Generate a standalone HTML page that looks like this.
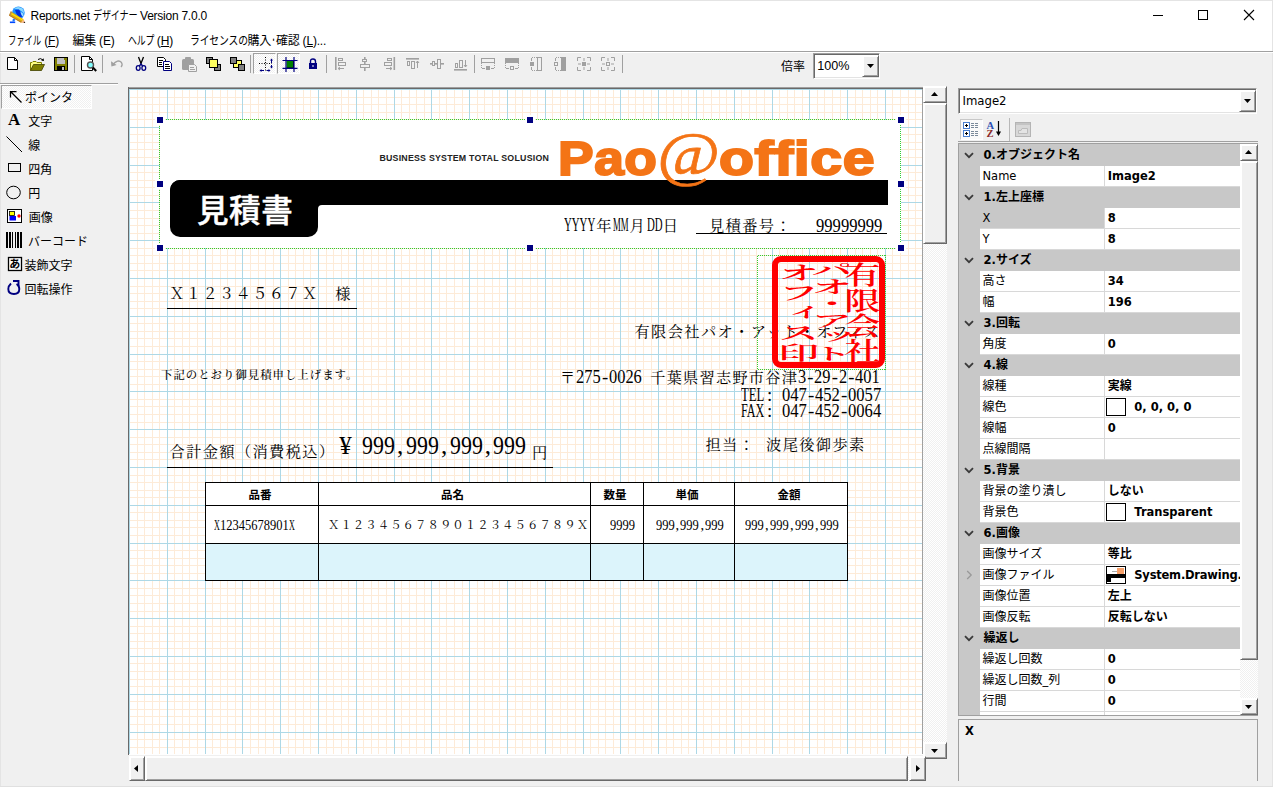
<!DOCTYPE html>
<html lang="ja"><head><meta charset="utf-8"><title>Reports.net デザイナー Version 7.0.0</title>
<style>
*{box-sizing:border-box;margin:0;padding:0}
html,body{width:1273px;height:787px;overflow:hidden;background:#f0f0f0}
body{position:relative;font-family:"Liberation Sans","Noto Sans CJK JP",sans-serif;font-size:12px;color:#000;line-height:1}
.a{position:absolute}
.t{position:absolute;white-space:nowrap;line-height:1}
.ui{font-family:"Liberation Sans","Noto Sans CJK JP",sans-serif;font-size:12px}
.mi{font-family:"Liberation Serif","Noto Serif CJK JP","Noto Serif CJK SC",serif}
.go{font-family:"Liberation Sans","Noto Sans CJK JP",sans-serif}
.hm{display:inline-block;font-family:"Liberation Serif",serif;letter-spacing:0;line-height:0;transform-origin:0 50%;white-space:pre}
/* 3D raised (scrollbar buttons / thumbs) */
.rb{position:absolute;background:#f0f0f0;border-style:solid;border-width:1px;border-color:#fff #696969 #696969 #fff;box-shadow:inset 1px 1px 0 #fff,inset -1px -1px 0 #a0a0a0}
.trk{position:absolute;background:repeating-conic-gradient(#fff 0 25%,#f0f0f0 0 50%) 0 0/2px 2px}
.sunk{position:absolute;background:#fff;border-style:solid;border-width:1px;border-color:#a0a0a0 #fff #fff #a0a0a0;box-shadow:inset 1px 1px 0 #696969,inset -1px -1px 0 #e3e3e3}
.chk{position:absolute;background:repeating-conic-gradient(#fff 0 25%,#f0f0f0 0 50%) 0 0/2px 2px;border-style:solid;border-width:1px;border-color:#a0a0a0 #fff #fff #a0a0a0}
.sep{position:absolute;width:1px;background:#a0a0a0}
svg{position:absolute;overflow:visible}
.hd{position:absolute;width:6px;height:6px;background:#000080;box-shadow:0 0 0 2px #fff}
/* property grid */
.pg{font-family:"DejaVu Sans","Noto Sans CJK JP",sans-serif;font-size:12px}
.pg .l{font-size:11.5px}
.cat{position:absolute;left:0;width:281px;height:21px;background:#c8c8c8;font-weight:bold}
.row{position:absolute;left:0;width:281px;height:21px;background:#c8c8c8}
.row .n{position:absolute;left:21px;top:0;width:124px;height:20px;background:#fff}
.row .v{position:absolute;left:146px;top:0;width:135px;height:20px;background:#fff;font-weight:bold;overflow:hidden}
.row .ln{position:absolute;left:21px;top:20px;width:260px;height:1px;background:#d8d8d8}
.row .vl{position:absolute;left:145px;top:0;width:1px;height:21px;background:#d8d8d8}
.pg .x{position:absolute;white-space:nowrap;line-height:1}
.k{display:inline-block;transform-origin:0 50%}

</style></head>
<body>
<div class="a" style="left:0px;top:0px;width:1273px;height:51px;background:#fff;"></div>
<div class="a" style="left:0px;top:0px;width:1273px;height:1px;background:#e4e4e4;"></div>
<div class="a" style="left:0px;top:0px;width:1px;height:787px;background:#e4e4e4;"></div>
<div class="a" style="left:1272px;top:0px;width:1px;height:787px;background:#e4e4e4;"></div>
<div class="a" style="left:0px;top:786px;width:1273px;height:1px;background:#e0e0e0;"></div>
<svg style="left:0px;top:0px" width="32" height="32" viewBox="0 0 32 32" ><circle cx="18.4" cy="12.8" r="6.300" fill="#1e90ff"/><path d="M14 8.500 Q18 5.500 22.500 8.500 Q24.500 11 24 14 Q22 9.500 14 8.500Z" fill="#8ad8ff"/><path d="M15 10 L19 9.500 L21 13 L22.500 16.500 L19 17.500 L16.500 14Z" fill="#0030e0"/><path d="M20.500 12 Q23.500 12.500 23.500 16 Q21.500 17 20.500 12Z" fill="#9fe0ff"/><rect x="9.900" y="21.500" width="5.300" height="1.600" fill="#0048ff"/><path d="M12.300 21.500 L13 18.500 L15.500 19.500 L14.200 21.500Z" fill="#1e78ff"/><path d="M10.800 11.300 L9 15.500 L21.200 22.700 L23.600 19.300Z" fill="#d9a31c"/><path d="M10.400 12.300 L23.300 19.800 L22.700 20.800 L9.900 13.400Z" fill="#ffe600"/><path d="M9.300 14.800 L21.600 22.100 L21.200 22.800 L9 15.500Z" fill="#b9771e"/><path d="M10.800 11.300 L9 15.500 L10.300 16.300 L12.100 12.100Z" fill="#c08a4a"/><path d="M23.600 19.300 L21.200 22.700 L25.200 23Z" fill="#f4b183"/><path d="M24.300 21.500 L23.600 22.900 L25.300 23.100Z" fill="#111"/></svg>
<div class="t ui" style="left:30.5px;top:9.8px;letter-spacing:-0.25px">Reports.net <span class="k" style="transform:scaleX(0.76);margin-right:-14.4px">デザイナー</span> Version 7.0.0</div>
<svg style="left:1153px;top:15px" width="11" height="1" viewBox="0 0 11 1" shape-rendering="crispEdges"><rect width="10" height="1" fill="#000"/></svg>
<svg style="left:1198px;top:10px" width="11" height="11" viewBox="0 0 11 11" shape-rendering="crispEdges"><rect x=".5" y=".5" width="9" height="9" fill="none" stroke="#000" stroke-width="1"/></svg>
<svg style="left:1244px;top:10px" width="11" height="11" viewBox="0 0 11 11" ><path d="M0 0 L10 10 M10 0 L0 10" stroke="#000" stroke-width="1.1" fill="none"/></svg>
<div class="t ui" style="left:8.3px;top:34.5px;letter-spacing:-.2px"><span class="k" style="transform:scaleX(0.7);margin-right:-14.4px">ファイル</span> (<u>F</u>)</div>
<div class="t ui" style="left:72.4px;top:34.5px;letter-spacing:-.2px">編集 (E)</div>
<div class="t ui" style="left:127.7px;top:34.5px;letter-spacing:-.2px"><span class="k" style="transform:scaleX(0.74);margin-right:-9.36px">ヘルプ</span> (<u>H</u>)</div>
<div class="t ui" style="left:189.8px;top:34.5px;letter-spacing:-.2px"><span class="k" style="transform:scaleX(0.82);margin-right:-12.96px">ライセンスの</span>購入<span class="k" style="transform:scaleX(.42);margin-right:-6.96px">・</span>確認 (<u>L</u>)...</div>
<div class="a" style="left:0px;top:51px;width:1273px;height:1px;background:#a0a0a0;"></div>
<div class="a" style="left:0px;top:52px;width:1273px;height:1px;background:#fff;"></div>
<div class="chk" style="left:253px;top:53px;width:23px;height:21px"></div>
<div class="chk" style="left:277px;top:53px;width:23px;height:21px"></div>
<svg style="left:5px;top:56px" width="16" height="16" viewBox="0 0 16 16" ><path d="M2.5 1.5 H9.5 L12.5 4.5 V13.5 H2.5 Z" fill="#fff" stroke="#000"/><path d="M9.5 1.5 V4.5 H12.5" fill="none" stroke="#000"/></svg>
<svg style="left:29px;top:56px" width="16" height="16" viewBox="0 0 16 16" ><path d="M1.5 14.5 V6.5 H3 L4 5.5 H7 L8 6.5 H12.5 V8.5" fill="#ffff80" stroke="#808000"/><path d="M1.5 14.5 L4.5 8.5 H15.5 L12.5 14.5 Z" fill="#808000" stroke="#404000" stroke-width=".8"/><path d="M9 3.5 Q11.5 1.5 14 4" fill="none" stroke="#000"/><path d="M12.2 4.6 L15 5 L14.6 2.2 Z" fill="#000"/></svg>
<svg style="left:53px;top:56px" width="16" height="16" viewBox="0 0 16 16" ><rect x="1.5" y="1.5" width="13" height="13" fill="#808000" stroke="#000"/><rect x="4" y="2" width="8" height="6" fill="#c0c0c0"/><rect x="11" y="2" width="1" height="2" fill="#808000"/><rect x="4" y="10" width="8" height="4" fill="#000"/><rect x="9" y="11" width="2" height="3" fill="#c0c0c0"/></svg>
<svg style="left:81px;top:56px" width="16" height="16" viewBox="0 0 16 16" ><path d="M.5 .5 H8.5 L11.5 3.5 V14.5 H.5 Z" fill="#fff" stroke="#000"/><path d="M8.5 .5 V3.5 H11.5" fill="none" stroke="#000"/><circle cx="9.5" cy="9" r="3" fill="#80ffff" stroke="#555" stroke-width="1.4"/><path d="M11.8 11.5 L15.2 15" stroke="#000" stroke-width="2"/></svg>
<svg style="left:109px;top:56px" width="16" height="16" viewBox="0 0 16 16" ><path d="M3.5 9 Q9 2.5 12.5 6.5 Q14 9 12 11" fill="none" stroke="#a0a0a0" stroke-width="1.3"/><path d="M2 5.2 L2.4 10.6 L7.6 9 Z" fill="#a0a0a0"/></svg>
<svg style="left:133px;top:56px" width="16" height="16" viewBox="0 0 16 16" ><path d="M5.5 1 L8.6 9 M10.5 1 L7.4 9" stroke="#000" stroke-width="1.3" fill="none"/><ellipse cx="5.2" cy="12" rx="1.9" ry="2.4" fill="none" stroke="#000080" stroke-width="1.3"/><ellipse cx="10.8" cy="12" rx="1.9" ry="2.4" fill="none" stroke="#000080" stroke-width="1.3"/><path d="M6.3 10 L8 8 L9.7 10" stroke="#000080" stroke-width="1.2" fill="none"/></svg>
<svg style="left:157px;top:56px" width="16" height="16" viewBox="0 0 16 16" ><path d="M.5 1.5 H6.5 L8.5 3.5 V10.5 H.5 Z" fill="#fff" stroke="#000"/><path d="M2 4.5H6 M2 6.5H5 M2 8.5H5" stroke="#000"/><path d="M6.5 5.5 H12.5 L14.5 7.5 V14.5 H6.5 Z" fill="#fff" stroke="#000080"/><path d="M8 8.5H12 M8 10.5H13 M8 12.5H13" stroke="#000"/></svg>
<svg style="left:181px;top:56px" width="16" height="16" viewBox="0 0 16 16" ><rect x="1" y="3" width="12" height="11" rx="1.5" fill="#a0a0a0"/><rect x="4" y="1" width="6" height="3.5" rx="1" fill="#a0a0a0"/><path d="M7.5 8.5 H13.5 L15.5 10.5 V15.5 H7.5 Z" fill="#f0f0f0" stroke="#a0a0a0"/><path d="M9 11.5H13 M9 13.5H14" stroke="#a0a0a0"/></svg>
<svg style="left:205px;top:56px" width="16" height="16" viewBox="0 0 16 16" ><rect x="1.5" y="1.5" width="6" height="6" fill="#808080" stroke="#000"/><rect x="9.5" y="8.5" width="6" height="6" fill="#808080" stroke="#000"/><rect x="4.5" y="3.5" width="8" height="8" fill="#ffff60" stroke="#000"/></svg>
<svg style="left:229px;top:56px" width="16" height="16" viewBox="0 0 16 16" ><rect x="4.5" y="4.5" width="8" height="7" fill="#ffff60" stroke="#000"/><rect x="1.5" y="1.5" width="6" height="6" fill="#808080" stroke="#000"/><rect x="9.5" y="8.5" width="6" height="6" fill="#808080" stroke="#000"/></svg>
<svg style="left:258px;top:56px" width="16" height="16" viewBox="0 0 16 16" ><path d="M7.5 1 V15" stroke="#000" stroke-dasharray="1 1.5"/><path d="M1 7.5 H14" stroke="#000" stroke-dasharray="1 1.5"/><path d="M13.5 3 V7 M13.5 9 V12 M3 14.5 H6 M8.5 14.5 H11" stroke="#000080"/><path d="M12 4.5 L13.5 2.5 L15 4.5Z M12 10.5 L13.5 12.5 L15 10.5Z M3.5 13 L1.5 14.5 L3.5 16Z M10.5 13 L12.5 14.5 L10.5 16Z" fill="#000080"/></svg>
<svg style="left:280.5px;top:56px" width="16" height="16" viewBox="0 0 16 16" ><rect x="5.500" y="5" width="7" height="7" fill="#008000"/><path d="M5.500 12 H12.500 V5" stroke="#000" fill="none"/><path d="M5 1 V16 M13 1 V16 M1.500 4.500 H16.500 M1.500 12.300 H16.500" stroke="#000080" stroke-width="1.200"/></svg>
<svg style="left:304.5px;top:56px" width="16" height="16" viewBox="0 0 16 16" ><path d="M5.5 8 V5.5 Q5.5 3 8 3 Q10.5 3 10.5 5.5 V8" fill="none" stroke="#000080" stroke-width="1.4"/><rect x="4" y="7" width="8" height="6" fill="#000080"/><rect x="7.5" y="9" width="1" height="2" fill="#fff"/></svg>
<svg style="left:333px;top:56px" width="16" height="16" viewBox="0 0 16 16" ><rect x="2" y="1" width="1.6" height="13" fill="#a0a0a0"/><rect x="5.5" y="2.5" width="4" height="2" fill="none" stroke="#a0a0a0"/><rect x="5.5" y="6.5" width="7" height="3" fill="none" stroke="#a0a0a0"/><path d="M5 12.5 H11 M5 12.5 l2 -1.5 M5 12.5 l2 1.5" stroke="#a0a0a0" fill="none"/></svg>
<svg style="left:357px;top:56px" width="16" height="16" viewBox="0 0 16 16" ><rect x="7" y="1" width="1.6" height="14" fill="#a0a0a0"/><rect x="5.5" y="3.5" width="4" height="2" fill="#f0f0f0" stroke="#a0a0a0"/><rect x="3.5" y="8.5" width="9" height="3" fill="#f0f0f0" stroke="#a0a0a0"/></svg>
<svg style="left:381px;top:56px" width="16" height="16" viewBox="0 0 16 16" ><rect x="12.5" y="1" width="1.6" height="13" fill="#a0a0a0"/><rect x="6.5" y="2.5" width="4" height="2" fill="none" stroke="#a0a0a0"/><rect x="3.5" y="6.5" width="7" height="3" fill="none" stroke="#a0a0a0"/><path d="M5 12.5 H11 M11 12.5 l-2 -1.5 M11 12.5 l-2 1.5" stroke="#a0a0a0" fill="none"/></svg>
<svg style="left:405px;top:56px" width="16" height="16" viewBox="0 0 16 16" ><rect x="1" y="2" width="13" height="1.6" fill="#a0a0a0"/><rect x="2.5" y="5.5" width="2" height="4" fill="none" stroke="#a0a0a0"/><rect x="6.5" y="5.5" width="3" height="7" fill="none" stroke="#a0a0a0"/><path d="M12.5 5 V12 M12.5 5 l-1.5 2 M12.5 5 l1.5 2" stroke="#a0a0a0" fill="none"/></svg>
<svg style="left:429px;top:56px" width="16" height="16" viewBox="0 0 16 16" ><rect x="1" y="7" width="14" height="1.6" fill="#a0a0a0"/><rect x="3.5" y="5.5" width="2" height="4" fill="#f0f0f0" stroke="#a0a0a0"/><rect x="8.5" y="3.5" width="3" height="9" fill="#f0f0f0" stroke="#a0a0a0"/></svg>
<svg style="left:453px;top:56px" width="16" height="16" viewBox="0 0 16 16" ><rect x="1" y="13" width="13" height="1.6" fill="#a0a0a0"/><rect x="2.5" y="7.5" width="2" height="4" fill="none" stroke="#a0a0a0"/><rect x="6.5" y="4.5" width="3" height="7" fill="none" stroke="#a0a0a0"/><path d="M12.5 4 V11 M12.5 11 l-1.5 -2 M12.5 11 l1.5 -2" stroke="#a0a0a0" fill="none"/></svg>
<svg style="left:480px;top:56px" width="16" height="16" viewBox="0 0 16 16" ><rect x="1.5" y="2.5" width="13" height="4" fill="#f0f0f0" stroke="#a0a0a0"/><path d="M1.5 7 V12 M14.5 7 V12" stroke="#a0a0a0" stroke-dasharray="1 1"/><rect x="6" y="10" width="4" height="4" fill="#a0a0a0"/><path d="M2 12.5 H5 M11 12.5 H14" stroke="#a0a0a0"/></svg>
<svg style="left:504px;top:56px" width="16" height="16" viewBox="0 0 16 16" ><rect x="1" y="2" width="14" height="5" fill="#a0a0a0"/><path d="M1.5 7 V12 M14.5 7 V12" stroke="#a0a0a0" stroke-dasharray="1 1"/><rect x="6.500" y="10.5" width="3" height="3" fill="none" stroke="#a0a0a0"/><path d="M2 12.5 H5 M11 12.5 H14" stroke="#a0a0a0"/></svg>
<svg style="left:528px;top:56px" width="16" height="16" viewBox="0 0 16 16" ><rect x="9.500" y="1.5" width="4" height="13" fill="#f0f0f0" stroke="#a0a0a0"/><path d="M4 1.5 H9 M4 14.5 H9" stroke="#a0a0a0" stroke-dasharray="1 1"/><rect x="2" y="6" width="4" height="4" fill="#a0a0a0"/><path d="M3.500 2 V5 M3.500 11 V14" stroke="#a0a0a0"/></svg>
<svg style="left:552px;top:56px" width="16" height="16" viewBox="0 0 16 16" ><rect x="9" y="1" width="5" height="14" fill="#a0a0a0"/><path d="M4 1.5 H9 M4 14.5 H9" stroke="#a0a0a0" stroke-dasharray="1 1"/><rect x="2.500" y="6.500" width="3" height="3" fill="none" stroke="#a0a0a0"/><path d="M3.500 2 V5 M3.500 11 V14" stroke="#a0a0a0"/></svg>
<svg style="left:576px;top:56px" width="16" height="16" viewBox="0 0 16 16" ><path d="M1.500 5 V1.500 H5 M11 1.500 H14.500 V5 M14.500 11 V14.500 H11 M5 14.500 H1.500 V11" fill="none" stroke="#a0a0a0"/><rect x="6" y="6" width="4" height="4" fill="#a0a0a0"/><path d="M8 2 V5 M8 11 V14 M2 8 H5 M11 8 H14" stroke="#a0a0a0"/></svg>
<svg style="left:600px;top:56px" width="16" height="16" viewBox="0 0 16 16" ><path d="M1.500 5 V1.500 H5 M11 1.500 H14.500 V5 M14.500 11 V14.500 H11 M5 14.500 H1.500 V11" fill="none" stroke="#a0a0a0"/><rect x="6.500" y="6.500" width="3" height="3" fill="none" stroke="#a0a0a0"/><path d="M8 2 V5 M8 11 V14 M2 8 H5 M11 8 H14" stroke="#a0a0a0"/></svg>
<div class="sep" style="left:74px;top:55px;height:18px"></div>
<div class="sep" style="left:102px;top:55px;height:18px"></div>
<div class="sep" style="left:250px;top:55px;height:18px"></div>
<div class="sep" style="left:326px;top:55px;height:18px"></div>
<div class="sep" style="left:474px;top:55px;height:18px"></div>
<div class="sep" style="left:622px;top:55px;height:18px"></div>
<div class="t ui" style="left:781px;top:61.3px;">倍率</div>
<div class="sunk" style="left:813px;top:53px;width:67px;height:26px"></div>
<div class="t ui" style="left:817.3px;top:60.1px;font-size:12.6px">100%</div>
<div class="rb" style="left:862px;top:55px;width:17px;height:22px"></div>
<svg style="left:867px;top:64px" width="7" height="4" viewBox="0 0 7 4" ><path d="M0 0 H7 L3.5 4Z" fill="#000"/></svg>
<div class="a" style="left:0px;top:83px;width:118px;height:1px;background:#a0a0a0;"></div>
<div class="a" style="left:0px;top:84px;width:118px;height:1px;background:#fff;"></div>
<div class="chk" style="left:1px;top:85px;width:91px;height:24px"></div>
<svg style="left:9px;top:90px" width="14" height="14" viewBox="0 0 14 14" ><path d="M1.500 7.500 V1.500 H7.500 M1.500 1.500 L12.500 12.500" fill="none" stroke="#000" stroke-width="1.250"/></svg>
<div class="t ui" style="left:25px;top:92px;">ポインタ</div>
<div class="t mi" style="left:8px;top:111.3px;font-weight:bold;font-size:17px">A</div>
<div class="t ui" style="left:28.2px;top:115.5px;">文字</div>
<svg style="left:6px;top:136px" width="17" height="17" viewBox="0 0 17 17" ><path d="M.5 .5 L16 16" stroke="#000" stroke-width="1"/></svg>
<div class="t ui" style="left:28.2px;top:139.5px;">線</div>
<svg style="left:8px;top:163px" width="14" height="10" viewBox="0 0 14 10" shape-rendering="crispEdges"><rect x=".5" y=".5" width="12" height="8" fill="none" stroke="#000" stroke-width="1"/></svg>
<div class="t ui" style="left:28.2px;top:163.5px;">四角</div>
<svg style="left:6px;top:185px" width="16" height="15" viewBox="0 0 16 15" ><ellipse cx="7.5" cy="7.500" rx="6.8" ry="6.300" fill="none" stroke="#000" stroke-width="1"/></svg>
<div class="t ui" style="left:28.2px;top:187.5px;">円</div>
<svg style="left:7px;top:209px" width="16" height="15" viewBox="0 0 16 15" ><rect x=".5" y=".5" width="14" height="13" fill="#fff" stroke="#000"/><rect x="2.500" y="2.500" width="5" height="4" fill="#ffff00" stroke="#000" stroke-width=".8"/><rect x="2.500" y="7" width="6.500" height="4.500" fill="#0000ff"/><circle cx="12" cy="7" r="1.700" fill="#ff0000"/></svg>
<div class="t ui" style="left:28.7px;top:211.5px;">画像</div>
<svg style="left:6px;top:232px" width="17" height="16" viewBox="0 0 17 16" shape-rendering="crispEdges"><path d="M1 0V16 M4 0V16 M6.500 0V16 M9.500 0V16 M12 0V16 M15 0V16" stroke="#000" stroke-width="1.600"/></svg>
<div class="t ui" style="left:28px;top:235.5px;">バーコード</div>
<svg style="left:8px;top:257px" width="15" height="14" viewBox="0 0 15 14" ><rect x=".5" y=".5" width="13" height="13" fill="#fff" stroke="#000" stroke-width="1.300"/></svg>
<div class="t ui" style="left:9.3px;top:258.6px;font-size:11px;font-weight:bold">あ</div>
<div class="t ui" style="left:24.5px;top:259.5px;">装飾文字</div>
<svg style="left:7px;top:280px" width="15" height="16" viewBox="0 0 15 16" ><path d="M4 3.500 Q1.300 6 1.300 9 Q1.300 14 7 14 Q12.300 14 12.300 9 Q12.300 5.500 9.500 4" fill="none" stroke="#000080" stroke-width="1.900"/><path d="M6 1 H11.500 V6.500" fill="none" stroke="#000080" stroke-width="1.900"/></svg>
<div class="t ui" style="left:24.5px;top:283.5px;">回転操作</div>
<div class="trk" style="left:923px;top:86px;width:24px;height:673px"></div>
<div class="rb" style="left:923px;top:86px;width:24px;height:17px"></div>
<svg style="left:931px;top:92px" width="7" height="4" viewBox="0 0 7 4" ><path d="M0 4 H7 L3.5 0Z" fill="#000"/></svg>
<div class="rb" style="left:923px;top:103px;width:24px;height:141px"></div>
<div class="rb" style="left:923px;top:742px;width:24px;height:17px"></div>
<svg style="left:931px;top:749px" width="7" height="4" viewBox="0 0 7 4" ><path d="M0 0 H7 L3.5 4Z" fill="#000"/></svg>
<div class="trk" style="left:129px;top:756px;width:794px;height:25px"></div>
<div class="rb" style="left:129px;top:756px;width:16px;height:25px"></div>
<svg style="left:134px;top:765px" width="4" height="7" viewBox="0 0 4 7" ><path d="M4 0 V7 L0 3.5Z" fill="#000"/></svg>
<div class="rb" style="left:145px;top:756px;width:763px;height:25px"></div>
<div class="rb" style="left:909px;top:756px;width:17px;height:25px"></div>
<svg style="left:916px;top:765px" width="4" height="7" viewBox="0 0 4 7" ><path d="M0 0 V7 L4 3.5Z" fill="#000"/></svg>
<div class="a" style="left:128px;top:87px;width:795px;height:1px;background:#a0a0a0;"></div>
<div class="a" style="left:128px;top:88px;width:795px;height:1px;background:#696969;"></div>
<div class="a" style="left:128px;top:87px;width:1px;height:668px;background:#696969;"></div>
<div class="a" style="left:922px;top:89px;width:1px;height:666px;background:#a0a0a0;"></div>
<div class="a" style="left:129px;top:754px;width:794px;height:1px;background:#fff;"></div>
<div class="a" id="cv" style="left:129px;top:89px;width:793px;height:665px;background:#fff;overflow:hidden">
<svg style="left:0;top:0" width="793" height="665" shape-rendering="crispEdges"><path d="M8.5 0V665M15.5 0V665M23.5 0V665M30.5 0V665M45.5 0V665M53.5 0V665M60.5 0V665M68.5 0V665M83.5 0V665M91.5 0V665M98.5 0V665M106.5 0V665M121.5 0V665M129.5 0V665M136.5 0V665M144.5 0V665M159.5 0V665M166.5 0V665M174.5 0V665M181.5 0V665M197.5 0V665M204.5 0V665M212.5 0V665M219.5 0V665M234.5 0V665M242.5 0V665M249.5 0V665M257.5 0V665M272.5 0V665M280.5 0V665M287.5 0V665M295.5 0V665M310.5 0V665M317.5 0V665M325.5 0V665M333.5 0V665M348.5 0V665M355.5 0V665M363.5 0V665M370.5 0V665M386.5 0V665M393.5 0V665M401.5 0V665M408.5 0V665M423.5 0V665M431.5 0V665M438.5 0V665M446.5 0V665M461.5 0V665M469.5 0V665M476.5 0V665M484.5 0V665M499.5 0V665M506.5 0V665M514.5 0V665M522.5 0V665M537.5 0V665M544.5 0V665M552.5 0V665M559.5 0V665M574.5 0V665M582.5 0V665M590.5 0V665M597.5 0V665M612.5 0V665M620.5 0V665M627.5 0V665M635.5 0V665M650.5 0V665M658.5 0V665M665.5 0V665M673.5 0V665M688.5 0V665M695.5 0V665M703.5 0V665M711.5 0V665M726.5 0V665M733.5 0V665M741.5 0V665M748.5 0V665M763.5 0V665M771.5 0V665M779.5 0V665M786.5 0V665M0 8.5H793M0 15.5H793M0 23.5H793M0 30.5H793M0 45.5H793M0 53.5H793M0 60.5H793M0 68.5H793M0 83.5H793M0 91.5H793M0 98.5H793M0 106.5H793M0 121.5H793M0 129.5H793M0 136.5H793M0 144.5H793M0 159.5H793M0 166.5H793M0 174.5H793M0 181.5H793M0 197.5H793M0 204.5H793M0 212.5H793M0 219.5H793M0 234.5H793M0 242.5H793M0 249.5H793M0 257.5H793M0 272.5H793M0 280.5H793M0 287.5H793M0 295.5H793M0 310.5H793M0 317.5H793M0 325.5H793M0 333.5H793M0 348.5H793M0 355.5H793M0 363.5H793M0 370.5H793M0 386.5H793M0 393.5H793M0 401.5H793M0 408.5H793M0 423.5H793M0 431.5H793M0 438.5H793M0 446.5H793M0 461.5H793M0 469.5H793M0 476.5H793M0 484.5H793M0 499.5H793M0 506.5H793M0 514.5H793M0 522.5H793M0 537.5H793M0 544.5H793M0 552.5H793M0 559.5H793M0 574.5H793M0 582.5H793M0 590.5H793M0 597.5H793M0 612.5H793M0 620.5H793M0 627.5H793M0 635.5H793M0 650.5H793M0 658.5H793" stroke="#fdebd8" stroke-width="1" fill="none"/><path d="M0.5 0V665M38.5 0V665M76.5 0V665M113.5 0V665M151.5 0V665M189.5 0V665M227.5 0V665M265.5 0V665M302.5 0V665M340.5 0V665M378.5 0V665M416.5 0V665M454.5 0V665M491.5 0V665M529.5 0V665M567.5 0V665M605.5 0V665M643.5 0V665M680.5 0V665M718.5 0V665M756.5 0V665M0 0.5H793M0 38.5H793M0 76.5H793M0 113.5H793M0 151.5H793M0 189.5H793M0 227.5H793M0 265.5H793M0 302.5H793M0 340.5H793M0 378.5H793M0 416.5H793M0 454.5H793M0 491.5H793M0 529.5H793M0 567.5H793M0 605.5H793M0 643.5H793" stroke="#add8e6" stroke-width="1" fill="none"/></svg>
<div class="a" style="left:31px;top:31px;width:741px;height:128px;background:#fff;"></div>
<div class="t go" id="biz" style="left:250.4px;top:64.6px;font-size:8.8px;font-weight:bold;color:#222;letter-spacing:.23px">BUSINESS SYSTEM TOTAL SOLUSION</div>
<div class="a" style="left:41px;top:90.5px;width:718.4px;height:25.1px;background:#000;border-radius:10px 0 0 0"></div>
<div class="a" style="left:41px;top:90.5px;width:147.6px;height:57.7px;background:#000;border-radius:10px 0 10px 10px"></div>
<svg style="left:188.6px;top:115.6px" width="4" height="4"><path d="M0 0 H4 Q0 0 0 4Z" fill="#000"/></svg>
<div class="t go" id="mitsu" style="left:68px;top:106.5px;font-size:31.5px;color:#fff;font-weight:500;-webkit-text-stroke:.45px #fff;letter-spacing:.6px">見積書</div>
<div class="t go" id="pao" style="left:429px;top:44.5px;font-size:48.5px;font-weight:bold;color:#f47416;-webkit-text-stroke:2px #f47416;letter-spacing:.5px;transform-origin:0 0;transform:scaleX(1.1)">Pao</div>
<div class="t mi" id="at" style="left:528px;top:33px;font-size:62px;font-style:italic;color:#f47416;-webkit-text-stroke:.7px #f47416;transform-origin:0 0;transform:scaleX(1.1)">@</div>
<div class="t go" id="office" style="left:590px;top:44.5px;font-size:48.5px;font-weight:bold;color:#f47416;-webkit-text-stroke:2px #f47416;letter-spacing:.5px;transform-origin:0 0;transform:scaleX(1.18)">office</div>
<div class="t mi" id="date" style="left:434px;top:129.2px;font-size:15.27px;letter-spacing:1.33px;"><span class="hm" style="font-size:18.93px;transform:scaleX(0.5707);margin:0 -22.48px 0 1.00px">YYYY</span>年<span class="hm" style="font-size:18.93px;transform:scaleX(0.4635);margin:0 -17.56px 0 0.50px">MM</span>月<span class="hm" style="font-size:18.93px;transform:scaleX(0.5707);margin:0 -11.24px 0 0.50px">DD</span>日</div>
<div class="t mi" id="mno" style="left:580px;top:129.2px;font-size:15.27px;letter-spacing:1.33px;">見積番号：</div>
<div class="t mi" id="nine8" style="left:687px;top:130px;font-size:15.27px;letter-spacing:1.33px;"><span class="hm" style="font-size:18.93px;transform:scaleX(0.8769);margin:0 -9.32px 0 0.00px">99999999</span></div>
<div class="a" style="left:567px;top:144px;width:191px;height:1px;background:#000;"></div>
<div class="t mi" id="cust" style="left:40.2px;top:196.8px;font-size:15.27px;letter-spacing:1.33px;">Ｘ１２３４５６７Ｘ　様</div>
<div class="a" style="left:38px;top:219px;width:190px;height:1px;background:#000;"></div>
<div class="t mi" id="comp" style="left:505.5px;top:234.7px;font-size:15.27px;letter-spacing:1.33px;">有限会社パオ・アット・オフィス</div>
<div class="t mi" id="addr" style="left:431px;top:282px;font-size:15.11px;letter-spacing:1.31px;">〒<span class="hm" style="font-size:18.74px;transform:scaleX(0.8762);margin:0 -3.48px 0 0.00px">275</span><span class="hm" style="font-size:18.74px;margin:0 0.98px">-</span><span class="hm" style="font-size:18.74px;transform:scaleX(0.8762);margin:0 -4.64px 0 0.00px">0026</span><span class="hm" style="font-size:18.74px;margin:0 1.76px">&nbsp;</span>千葉県習志野市谷津<span class="hm" style="font-size:18.74px;transform:scaleX(0.8762);margin:0 -1.16px 0 0.00px">3</span><span class="hm" style="font-size:18.74px;margin:0 0.98px">-</span><span class="hm" style="font-size:18.74px;transform:scaleX(0.8762);margin:0 -2.32px 0 0.00px">29</span><span class="hm" style="font-size:18.74px;margin:0 0.98px">-</span><span class="hm" style="font-size:18.74px;transform:scaleX(0.8762);margin:0 -1.16px 0 0.00px">2</span><span class="hm" style="font-size:18.74px;margin:0 0.98px">-</span><span class="hm" style="font-size:18.74px;transform:scaleX(0.8762);margin:0 -3.48px 0 0.00px">401</span></div>
<div class="t mi" id="tel" style="left:611.5px;top:298.8px;font-size:15.27px;letter-spacing:1.33px;"><span class="hm" style="font-size:18.93px;transform:scaleX(0.6747);margin:0 -10.54px 0 0.75px">TEL</span><span class="hm" style="font-size:18.93px;margin:0 1.52px">:</span><span class="hm" style="font-size:18.93px;margin:0 1.78px">&nbsp;</span><span class="hm" style="font-size:18.93px;transform:scaleX(0.8769);margin:0 -3.49px 0 0.00px">047</span><span class="hm" style="font-size:18.93px;margin:0 1.00px">-</span><span class="hm" style="font-size:18.93px;transform:scaleX(0.8769);margin:0 -3.49px 0 0.00px">452</span><span class="hm" style="font-size:18.93px;margin:0 1.00px">-</span><span class="hm" style="font-size:18.93px;transform:scaleX(0.8769);margin:0 -4.66px 0 0.00px">0057</span></div>
<div class="t mi" id="fax" style="left:611.5px;top:314.8px;font-size:15.27px;letter-spacing:1.33px;"><span class="hm" style="font-size:18.93px;transform:scaleX(0.6419);margin:0 -12.31px 0 0.75px">FAX</span><span class="hm" style="font-size:18.93px;margin:0 1.52px">:</span><span class="hm" style="font-size:18.93px;margin:0 1.78px">&nbsp;</span><span class="hm" style="font-size:18.93px;transform:scaleX(0.8769);margin:0 -3.49px 0 0.00px">047</span><span class="hm" style="font-size:18.93px;margin:0 1.00px">-</span><span class="hm" style="font-size:18.93px;transform:scaleX(0.8769);margin:0 -3.49px 0 0.00px">452</span><span class="hm" style="font-size:18.93px;margin:0 1.00px">-</span><span class="hm" style="font-size:18.93px;transform:scaleX(0.8769);margin:0 -4.66px 0 0.00px">0064</span></div>
<div class="t mi" id="tanto" style="left:576.5px;top:347.7px;font-size:15.27px;letter-spacing:1.33px;">担当：<span class="hm" style="font-size:18.93px;margin:0 1.78px">&nbsp;</span><span style="margin-left:2.5px">波尾後御歩素</span></div>
<div class="t mi" id="kaki" style="left:32px;top:281.1px;font-size:11.41px;letter-spacing:0.99px;font-weight:500">下記のとおり御見積申し上げます。</div>
<div class="t mi" id="gokei" style="left:40.5px;top:355.2px;font-size:15.27px;letter-spacing:1.33px;">合計金額（消費税込）</div>
<div class="t mi" id="yen" style="left:211px;top:347.5px;font-size:20.15px;letter-spacing:1.75px;"><span class="hm" style="font-size:24.99px;margin:0 -0.77px">¥</span><span class="hm" style="font-size:24.99px;margin:0 2.35px">&nbsp;</span><span class="hm" style="font-size:24.99px;transform:scaleX(0.8764);margin:0 -4.64px 0 0.00px">999</span><span class="hm" style="font-size:24.99px;margin:0 2.35px">,</span><span class="hm" style="font-size:24.99px;transform:scaleX(0.8764);margin:0 -4.64px 0 0.00px">999</span><span class="hm" style="font-size:24.99px;margin:0 2.35px">,</span><span class="hm" style="font-size:24.99px;transform:scaleX(0.8764);margin:0 -4.64px 0 0.00px">999</span><span class="hm" style="font-size:24.99px;margin:0 2.35px">,</span><span class="hm" style="font-size:24.99px;transform:scaleX(0.8764);margin:0 -4.64px 0 0.00px">999</span></div>
<div class="t mi" id="en" style="left:403px;top:356.2px;font-size:15.27px;letter-spacing:1.33px;">円</div>
<div class="a" style="left:38px;top:377.5px;width:386px;height:1px;background:#000;"></div>
<svg style="left:0;top:0" width="793" height="665" shape-rendering="crispEdges"><path d="M629 166.5H757M629 280.5H757M628.5 167V281M756.5 166V281" stroke="#32cd32" stroke-width="1" stroke-dasharray="1 1" fill="none"/></svg>
<div class="a" style="left:643.4px;top:167.1px;width:113px;height:112px;border:6.5px solid #f00;border-radius:9px"></div>
<div class="t mi" style="left:713.5px;top:172.81px;width:32px;height:128px;line-height:32px;font-size:32px;writing-mode:vertical-rl;color:#f00;font-weight:600;transform-origin:50% 0;transform:scale(1.125,0.790)">有限会社</div>
<div class="t mi" style="left:683px;top:171.953px;width:32px;height:192px;line-height:32px;font-size:32px;writing-mode:vertical-rl;color:#f00;font-weight:600;transform-origin:50% 0;transform:scale(1.312,0.528)">パオ・アット</div>
<div class="t mi" style="left:650px;top:174.011px;width:32px;height:160px;line-height:32px;font-size:32px;writing-mode:vertical-rl;color:#f00;font-weight:600;transform-origin:50% 0;transform:scale(1.281,0.618)">オフィス印</div>
<div class="a" style="left:76px;top:393px;width:643px;height:61px;background:#fff;"></div>
<div class="a" style="left:76px;top:454px;width:643px;height:38px;background:#dcf4fb;"></div>
<div class="a" style="left:76px;top:393px;width:1px;height:99px;background:#000;"></div>
<div class="a" style="left:189px;top:393px;width:1px;height:99px;background:#000;"></div>
<div class="a" style="left:461px;top:393px;width:1px;height:99px;background:#000;"></div>
<div class="a" style="left:514px;top:393px;width:1px;height:99px;background:#000;"></div>
<div class="a" style="left:605px;top:393px;width:1px;height:99px;background:#000;"></div>
<div class="a" style="left:718px;top:393px;width:1px;height:99px;background:#000;"></div>
<div class="a" style="left:76px;top:393px;width:643px;height:1px;background:#000;"></div>
<div class="a" style="left:76px;top:416px;width:643px;height:1px;background:#000;"></div>
<div class="a" style="left:76px;top:454px;width:643px;height:1px;background:#000;"></div>
<div class="a" style="left:76px;top:491px;width:643px;height:1px;background:#000;"></div>
<div class="t go" id="th0" style="left:133px;top:400.8px;width:60px;margin-left:-32px;text-align:center;font-size:11.5px;font-weight:bold">品番</div>
<div class="t go" id="th1" style="left:325.5px;top:400.8px;width:60px;margin-left:-32px;text-align:center;font-size:11.5px;font-weight:bold">品名</div>
<div class="t go" id="th2" style="left:488px;top:400.8px;width:60px;margin-left:-32px;text-align:center;font-size:11.5px;font-weight:bold">数量</div>
<div class="t go" id="th3" style="left:560px;top:400.8px;width:60px;margin-left:-32px;text-align:center;font-size:11.5px;font-weight:bold">単価</div>
<div class="t go" id="th4" style="left:662px;top:400.8px;width:60px;margin-left:-32px;text-align:center;font-size:11.5px;font-weight:bold">金額</div>
<div class="t mi" id="c0" style="left:84.5px;top:432.1px;font-size:11.5px;letter-spacing:1px;"><span class="hm" style="font-size:14.26px;transform:scaleX(0.5705);margin:0 -4.24px 0 0.19px">X</span><span class="hm" style="font-size:14.26px;transform:scaleX(0.8766);margin:0 -9.68px 0 0.00px">12345678901</span><span class="hm" style="font-size:14.26px;transform:scaleX(0.5705);margin:0 -4.24px 0 0.19px">X</span></div>
<div class="t mi" id="c1" style="left:199px;top:431px;font-size:11.45px;letter-spacing:1px;">Ｘ１２３４５６７８９０１２３４５６７８９Ｘ</div>
<div class="t mi" id="c2" style="left:480.5px;top:432.1px;font-size:11.5px;letter-spacing:1px;"><span class="hm" style="font-size:14.26px;transform:scaleX(0.8766);margin:0 -3.52px 0 0.00px">9999</span></div>
<div class="t mi" id="c3" style="left:526.5px;top:432.1px;font-size:11.5px;letter-spacing:1px;"><span class="hm" style="font-size:14.26px;transform:scaleX(0.8766);margin:0 -2.64px 0 0.00px">999</span><span class="hm" style="font-size:14.26px;margin:0 1.34px">,</span><span class="hm" style="font-size:14.26px;transform:scaleX(0.8766);margin:0 -2.64px 0 0.00px">999</span><span class="hm" style="font-size:14.26px;margin:0 1.34px">,</span><span class="hm" style="font-size:14.26px;transform:scaleX(0.8766);margin:0 -2.64px 0 0.00px">999</span></div>
<div class="t mi" id="c4" style="left:616px;top:432.1px;font-size:11.5px;letter-spacing:1px;"><span class="hm" style="font-size:14.26px;transform:scaleX(0.8766);margin:0 -2.64px 0 0.00px">999</span><span class="hm" style="font-size:14.26px;margin:0 1.34px">,</span><span class="hm" style="font-size:14.26px;transform:scaleX(0.8766);margin:0 -2.64px 0 0.00px">999</span><span class="hm" style="font-size:14.26px;margin:0 1.34px">,</span><span class="hm" style="font-size:14.26px;transform:scaleX(0.8766);margin:0 -2.64px 0 0.00px">999</span><span class="hm" style="font-size:14.26px;margin:0 1.34px">,</span><span class="hm" style="font-size:14.26px;transform:scaleX(0.8766);margin:0 -2.64px 0 0.00px">999</span></div>
<svg style="left:0;top:0" width="793" height="665" shape-rendering="crispEdges"><path d="M31 30.5H772M31 159.5H772M30.5 31V160M771.5 30V160" stroke="#32cd32" stroke-width="1" stroke-dasharray="1 1" fill="none"/></svg>
<div class="hd" style="left:28px;top:28px"></div>
<div class="hd" style="left:28px;top:92px"></div>
<div class="hd" style="left:28px;top:156px"></div>
<div class="hd" style="left:398px;top:28px"></div>
<div class="hd" style="left:398px;top:156px"></div>
<div class="hd" style="left:769px;top:28px"></div>
<div class="hd" style="left:769px;top:92px"></div>
<div class="hd" style="left:769px;top:156px"></div>
</div>
<div class="sunk" style="left:958px;top:88px;width:299px;height:26px"></div>
<div class="t pg" style="left:962.5px;top:95.8px;font-size:11.7px">Image2</div>
<div class="rb" style="left:1239px;top:90px;width:17px;height:22px"></div>
<svg style="left:1244px;top:99px" width="7" height="4" viewBox="0 0 7 4" ><path d="M0 0 H7 L3.5 4Z" fill="#000"/></svg>
<div class="a" style="left:960px;top:119px;width:23px;height:21px;background:#fafafa;border:1px solid #d0d0d0;border-color:#c8c8c8 #fff #fff #c8c8c8"></div>
<svg style="left:963px;top:121px" width="17" height="16" viewBox="0 0 17 16" shape-rendering="crispEdges"><rect x=".5" y="1.500" width="6" height="6" fill="#fff" stroke="#4a7fd0"/><rect x=".5" y="9.500" width="6" height="6" fill="#fff" stroke="#4a7fd0"/><path d="M2 4.500H5 M3.500 3V6 M2 12.500H5 M3.500 11V14" stroke="#000"/><path d="M8 2.500H16 M8 4.500H16 M8 6.500H16 M8 10.500H16 M8 12.500H16 M8 14.500H16" stroke="#7a8a9a" stroke-dasharray="3 1"/></svg>
<div class="t mi" style="left:986.5px;top:121px;font-weight:bold;font-size:10.5px;color:#2b4fb5">A</div>
<div class="t mi" style="left:986.5px;top:129px;font-weight:bold;font-size:10.5px;color:#8b2a2a">Z</div>
<svg style="left:996px;top:121px" width="6" height="16" viewBox="0 0 6 16" ><path d="M2.500 0V13" stroke="#000" stroke-width="1.200"/><path d="M0 10.500H5L2.500 15Z" fill="#000"/></svg>
<div class="a" style="left:1009px;top:118px;width:1px;height:23px;background:#b8b8b8;"></div>
<svg style="left:1015px;top:122px" width="16" height="15" viewBox="0 0 16 15" ><rect x=".5" y=".5" width="15" height="14" fill="#d8d8d8" stroke="#b4b4b4"/><rect x="1" y="1" width="14" height="2" fill="#c4c4c4"/><path d="M3.500 8.500H6L7 6.500H12.500V11.500H3.500Z" fill="#e4e4e4" stroke="#bcbcbc"/></svg>
<div class="a" style="left:958px;top:141px;width:300px;height:1px;background:#a0a0a0;"></div>
<div class="a pg" style="left:958px;top:143px;width:300px;height:573px;border:1px solid #a0a0a0;border-right:0;background:#fff;overflow:hidden">
<div class="a" style="left:0;top:0;width:281px;height:571px;background:#c8c8c8"></div>
<div class="cat" style="top:1px"><svg style="left:5px;top:6.500px" width="10" height="7"><path d="M1 1.200 L5 5.200 L9 1.200" fill="none" stroke="#3a3a3a" stroke-width="1.800"/></svg><div class="x" style="left:24.500px;top:4px"><span class="l">0.</span>オブジェクト名</div></div>
<div class="row" style="top:22px"><div class="n"><div class="x" style="left:2.500px;top:4px"><span class="l">Name</span></div></div><div class="vl"></div><div class="v"><div class="x" style="left:2.8px;top:4px"><span class="l">Image2</span></div></div><div class="ln"></div></div>
<div class="cat" style="top:43px"><svg style="left:5px;top:6.500px" width="10" height="7"><path d="M1 1.200 L5 5.200 L9 1.200" fill="none" stroke="#3a3a3a" stroke-width="1.800"/></svg><div class="x" style="left:24.500px;top:4px"><span class="l">1.</span>左上座標</div></div>
<div class="row" style="top:64px"><div class="n" style="background:#c8c8c8"><div class="x" style="left:2.500px;top:4px"><span class="l">X</span></div></div><div class="vl"></div><div class="v"><div class="x" style="left:2.8px;top:4px"><span class="l">8</span></div></div><div class="ln"></div></div>
<div class="row" style="top:85px"><div class="n"><div class="x" style="left:2.500px;top:4px"><span class="l">Y</span></div></div><div class="vl"></div><div class="v"><div class="x" style="left:2.8px;top:4px"><span class="l">8</span></div></div><div class="ln"></div></div>
<div class="cat" style="top:106px"><svg style="left:5px;top:6.500px" width="10" height="7"><path d="M1 1.200 L5 5.200 L9 1.200" fill="none" stroke="#3a3a3a" stroke-width="1.800"/></svg><div class="x" style="left:24.500px;top:4px"><span class="l">2.</span>サイズ</div></div>
<div class="row" style="top:127px"><div class="n"><div class="x" style="left:2.500px;top:4px">高さ</div></div><div class="vl"></div><div class="v"><div class="x" style="left:2.8px;top:4px"><span class="l">34</span></div></div><div class="ln"></div></div>
<div class="row" style="top:148px"><div class="n"><div class="x" style="left:2.500px;top:4px">幅</div></div><div class="vl"></div><div class="v"><div class="x" style="left:2.8px;top:4px"><span class="l">196</span></div></div><div class="ln"></div></div>
<div class="cat" style="top:169px"><svg style="left:5px;top:6.500px" width="10" height="7"><path d="M1 1.200 L5 5.200 L9 1.200" fill="none" stroke="#3a3a3a" stroke-width="1.800"/></svg><div class="x" style="left:24.500px;top:4px"><span class="l">3.</span>回転</div></div>
<div class="row" style="top:190px"><div class="n"><div class="x" style="left:2.500px;top:4px">角度</div></div><div class="vl"></div><div class="v"><div class="x" style="left:2.8px;top:4px"><span class="l">0</span></div></div><div class="ln"></div></div>
<div class="cat" style="top:211px"><svg style="left:5px;top:6.500px" width="10" height="7"><path d="M1 1.200 L5 5.200 L9 1.200" fill="none" stroke="#3a3a3a" stroke-width="1.800"/></svg><div class="x" style="left:24.500px;top:4px"><span class="l">4.</span>線</div></div>
<div class="row" style="top:232px"><div class="n"><div class="x" style="left:2.500px;top:4px">線種</div></div><div class="vl"></div><div class="v"><div class="x" style="left:2.8px;top:4px">実線</div></div><div class="ln"></div></div>
<div class="row" style="top:253px"><div class="n"><div class="x" style="left:2.500px;top:4px">線色</div></div><div class="vl"></div><div class="v"><div class="a" style="left:1px;top:.5px;width:20px;height:18px;border:1px solid #000;background:#fff"></div><div class="x" style="left:29.3px;top:4px"><span class="l">0, 0, 0, 0</span></div></div><div class="ln"></div></div>
<div class="row" style="top:274px"><div class="n"><div class="x" style="left:2.500px;top:4px">線幅</div></div><div class="vl"></div><div class="v"><div class="x" style="left:2.8px;top:4px"><span class="l">0</span></div></div><div class="ln"></div></div>
<div class="row" style="top:295px"><div class="n"><div class="x" style="left:2.500px;top:4px">点線間隔</div></div><div class="vl"></div><div class="v"><div class="x" style="left:2.8px;top:4px"></div></div><div class="ln"></div></div>
<div class="cat" style="top:316px"><svg style="left:5px;top:6.500px" width="10" height="7"><path d="M1 1.200 L5 5.200 L9 1.200" fill="none" stroke="#3a3a3a" stroke-width="1.800"/></svg><div class="x" style="left:24.500px;top:4px"><span class="l">5.</span>背景</div></div>
<div class="row" style="top:337px"><div class="n"><div class="x" style="left:2.500px;top:4px">背景の塗り潰し</div></div><div class="vl"></div><div class="v"><div class="x" style="left:2.8px;top:4px">しない</div></div><div class="ln"></div></div>
<div class="row" style="top:358px"><div class="n"><div class="x" style="left:2.500px;top:4px">背景色</div></div><div class="vl"></div><div class="v"><div class="a" style="left:1px;top:.5px;width:20px;height:18px;border:1px solid #000;background:#fff"></div><div class="x" style="left:29.3px;top:4px"><span class="l">Transparent</span></div></div><div class="ln"></div></div>
<div class="cat" style="top:379px"><svg style="left:5px;top:6.500px" width="10" height="7"><path d="M1 1.200 L5 5.200 L9 1.200" fill="none" stroke="#3a3a3a" stroke-width="1.800"/></svg><div class="x" style="left:24.500px;top:4px"><span class="l">6.</span>画像</div></div>
<div class="row" style="top:400px"><div class="n"><div class="x" style="left:2.500px;top:4px">画像サイズ</div></div><div class="vl"></div><div class="v"><div class="x" style="left:2.8px;top:4px">等比</div></div><div class="ln"></div></div>
<div class="row" style="top:421px"><svg style="left:7px;top:5px" width="7" height="10"><path d="M1.200 1 L5.200 5 L1.200 9" fill="none" stroke="#999" stroke-width="1.300"/></svg><div class="n"><div class="x" style="left:2.500px;top:4px">画像ファイル</div></div><div class="vl"></div><div class="v"><div class="a" style="left:1px;top:.5px;width:20px;height:18px;background:#fff;border:1px solid #000"></div><div class="a" style="left:2px;top:9px;width:18px;height:4px;background:#000"></div><div class="a" style="left:2px;top:9px;width:4px;height:8px;background:#000"></div><div class="a" style="left:12px;top:3px;width:7px;height:6px;background:#f6a06a"></div><div class="a" style="left:7px;top:6px;width:5px;height:1px;background:#aaa"></div><div class="x" style="left:29.3px;top:4px"><span class="l" style="letter-spacing:-.22px">System.Drawing.</span></div></div><div class="ln"></div></div>
<div class="row" style="top:442px"><div class="n"><div class="x" style="left:2.500px;top:4px">画像位置</div></div><div class="vl"></div><div class="v"><div class="x" style="left:2.8px;top:4px">左上</div></div><div class="ln"></div></div>
<div class="row" style="top:463px"><div class="n"><div class="x" style="left:2.500px;top:4px">画像反転</div></div><div class="vl"></div><div class="v"><div class="x" style="left:2.8px;top:4px">反転しない</div></div><div class="ln"></div></div>
<div class="cat" style="top:484px"><svg style="left:5px;top:6.500px" width="10" height="7"><path d="M1 1.200 L5 5.200 L9 1.200" fill="none" stroke="#3a3a3a" stroke-width="1.800"/></svg><div class="x" style="left:24.500px;top:4px">繰返し</div></div>
<div class="row" style="top:505px"><div class="n"><div class="x" style="left:2.500px;top:4px">繰返し回数</div></div><div class="vl"></div><div class="v"><div class="x" style="left:2.8px;top:4px"><span class="l">0</span></div></div><div class="ln"></div></div>
<div class="row" style="top:526px"><div class="n"><div class="x" style="left:2.500px;top:4px">繰返し回数<span class="l">_</span>列</div></div><div class="vl"></div><div class="v"><div class="x" style="left:2.8px;top:4px"><span class="l">0</span></div></div><div class="ln"></div></div>
<div class="row" style="top:547px"><div class="n"><div class="x" style="left:2.500px;top:4px">行間</div></div><div class="vl"></div><div class="v"><div class="x" style="left:2.8px;top:4px"><span class="l">0</span></div></div><div class="ln"></div></div>
<div class="row" style="top:568px"><div class="n"><div class="x" style="left:2.500px;top:4px"></div></div><div class="vl"></div><div class="v"><div class="x" style="left:2.8px;top:4px"></div></div><div class="ln"></div></div>
<div class="trk" style="left:281px;top:0;width:18px;height:571px"></div>
<div class="rb" style="left:281px;top:0;width:18px;height:17px"></div>
<svg style="left:286px;top:6px" width="7" height="4" viewBox="0 0 7 4" ><path d="M0 4 H7 L3.5 0Z" fill="#000"/></svg>
<div class="rb" style="left:281px;top:17px;width:18px;height:499px"></div>
<div class="rb" style="left:281px;top:554px;width:18px;height:17px"></div>
<svg style="left:286px;top:561px" width="7" height="4" viewBox="0 0 7 4" ><path d="M0 0 H7 L3.5 4Z" fill="#000"/></svg>
</div>
<div class="a pg" style="left:958px;top:719px;width:300px;height:62px;border:1px solid #a0a0a0;border-bottom:0;background:#f0f0f0"><div class="x" style="left:6px;top:5.500px;font-weight:bold;font-size:11.500px">X</div></div>
</body></html>
